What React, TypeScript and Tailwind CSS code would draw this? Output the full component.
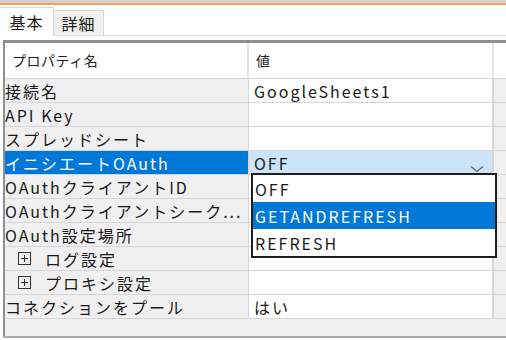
import React from "react";

const FONT = { fontFamily: '"Noto Sans CJK JP", "Noto Sans", "Liberation Sans", sans-serif' };

interface Row {
  name: string;
  value?: string;
  group?: boolean;
  selected?: boolean;
}

const rows: Row[] = [
  { name: "接続名", value: "GoogleSheets1" },
  { name: "API Key" },
  { name: "スプレッドシート" },
  { name: "イニシエートOAuth", value: "OFF", selected: true },
  { name: "OAuthクライアントID" },
  { name: "OAuthクライアントシーク..." },
  { name: "OAuth設定場所" },
  { name: "ログ設定", group: true },
  { name: "プロキシ設定", group: true },
  { name: "コネクションをプール", value: "はい" },
];

const options = ["OFF", "GETANDREFRESH", "REFRESH"];

function PlusBox() {
  return (
    <svg width="13" height="13" viewBox="0 0 13 13" fill="none" className="flex-shrink-0">
      <rect x="0.5" y="0.5" width="12" height="12" stroke="#333" />
      <path d="M3 6.5H10M6.5 3V10" stroke="#333" />
    </svg>
  );
}

function PropRow({ row }: { row: Row }) {
  return (
    <div className="flex h-[24px] border-b border-[#d6d6d6]">
      {/* Name cell */}
      <div
        className={`w-[244px] flex items-center border-r border-[#d6d6d6] whitespace-nowrap overflow-hidden ${
          row.selected ? "bg-[#0078d7] text-white" : "bg-[#f0f0f0] text-[#1a1a1a]"
        } ${row.group ? "pl-[13px] gap-[14px]" : "pl-0"}`}
      >
        {row.group && <PlusBox />}
        <span>{row.name}</span>
      </div>

      {/* Value cell */}
      <div
        className={`w-[245px] flex items-center justify-between pl-[5px] pr-[8px] border-r-2 border-[#d6d6d6] ${
          row.selected ? "bg-[#cce4f7]" : "bg-white"
        } text-[#1a1a1a]`}
      >
        <span>{row.value ?? ""}</span>
        {row.selected && (
          <svg width="14" height="8" viewBox="0 0 14 8" fill="none" className="mt-[12px]">
            <path d="M1 1.5L7 6.5L13 1.5" stroke="#666" strokeWidth="1.3" />
          </svg>
        )}
      </div>

      <div className="flex-1 bg-[#f0f0f0]" />
    </div>
  );
}

export default function App() {
  return (
    <div className="relative w-[506px] h-[340px] bg-white overflow-hidden" style={FONT}>
      {/* Window frame accent */}
      <div className="h-[3px] bg-[#d2d2d2]" />
      <div className="h-[2px] bg-[#f6a455]" />

      {/* Tabs */}
      <div className="flex items-end h-[31px] border-b border-[#e2e2e2]">
        <div className="w-[54px] h-[29px] -mb-px bg-white border-t border-r border-[#d9d9d9] flex items-center justify-center text-[16px] tracking-[1px] text-[#1a1a1a]">
          基本
        </div>
        <div className="w-[50px] h-[25px] bg-[#f0f0f0] border-t border-r border-[#d9d9d9] flex items-center justify-center text-[16px] tracking-[1px] text-[#1a1a1a]">
          詳細
        </div>
      </div>

      {/* Property grid */}
      <div className="mt-[4px] ml-[3px] h-[296px] border-t-[3px] border-l-2 border-[#8f8f8f] bg-[#f0f0f0] flex flex-col text-[16px] tracking-[2px]">
        <div className="flex h-[36px] bg-white border-b border-[#d6d6d6]">
          <div className="w-[244px] flex items-center pl-[7px] border-r-2 border-[#e4e4e4] text-[14px] tracking-[0.5px] text-[#222]">
            プロパティ名
          </div>
          <div className="w-[245px] flex items-center pl-[7px] border-r-2 border-[#e4e4e4] text-[14px] tracking-normal text-[#222]">
            値
          </div>
          <div className="flex-1" />
        </div>

        {rows.map((row) => (
          <PropRow key={row.name} row={row} />
        ))}

        <div className="flex-1 bg-[#f0f0f0]" />
      </div>
      <div className="ml-[3px] h-[2px] bg-[#a8a8a8]" />

      {/* Open dropdown list */}
      <div className="absolute left-[251px] top-[173px] w-[246px] border-2 border-[#1e1e1e] bg-white text-[16px] tracking-[2px] text-[#1a1a1a]" style={FONT}>
        {options.map((opt) => (
          <div
            key={opt}
            className={`h-[27px] flex items-center pl-[2px] ${
              opt === "GETANDREFRESH" ? "bg-[#0078d7] text-white" : ""
            }`}
          >
            {opt}
          </div>
        ))}
      </div>
    </div>
  );
}
